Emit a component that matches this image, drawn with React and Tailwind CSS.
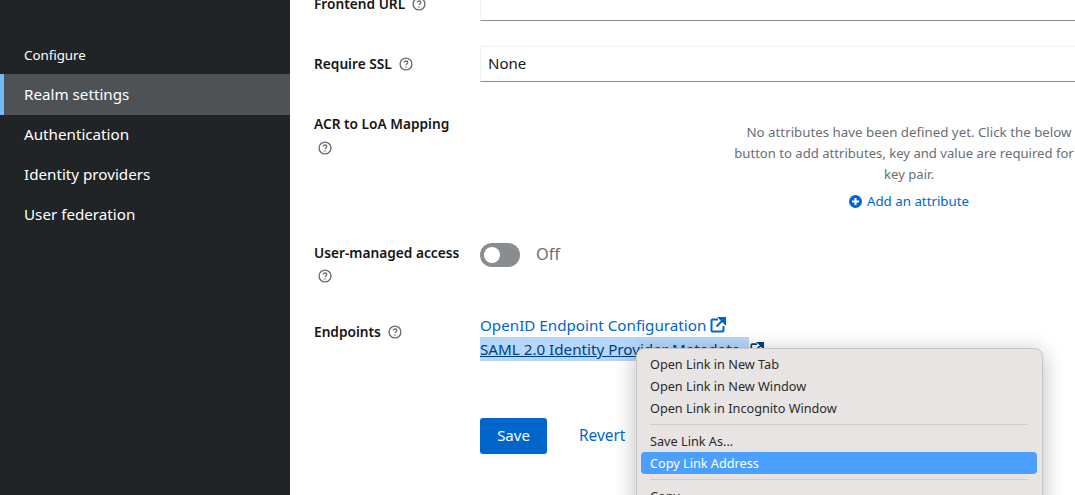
import React from "react";

const font = { fontFamily: '"Noto Sans", sans-serif' };

function Help({ className = "" }) {
  return (
    <svg width="14" height="14" viewBox="0 0 14 14" fill="none" className={"shrink-0 " + className}>
      <circle cx="7" cy="7" r="5.9" stroke="#6a6e73" strokeWidth="1.4" />
      <path d="M5.2 5.6c0-1 .8-1.6 1.8-1.6s1.8.6 1.8 1.5c0 1.3-1.8 1.3-1.8 2.6" stroke="#6a6e73" strokeWidth="1.3" fill="none" />
      <circle cx="7" cy="10" r=".8" fill="#6a6e73" />
    </svg>
  );
}

function External({ color, size = 16 }) {
  return (
    <svg width={size} height={size} viewBox="0 0 16 16" fill="none">
      <path d="M8 2.5H2.5a1 1 0 0 0-1 1v10a1 1 0 0 0 1 1h10a1 1 0 0 0 1-1V9" stroke={color} strokeWidth="2" />
      <path d="M6.5 9.5 14 2M9.5 1h5.5v5.5z" stroke={color} strokeWidth="2" fill={color} />
    </svg>
  );
}

function NavItem({ children, active }) {
  return (
    <div className={"flex items-center text-[15.2px] text-white " + (active ? "h-[41px] bg-[#4f5255] border-l-4 border-[#73bcf7] pl-5" : "h-10 pb-[2px] pl-6")}>
      {children}
    </div>
  );
}

function MenuItem({ children, active }) {
  return (
    <div className={"h-[22px] flex items-center ml-[4px] mr-[5px] px-[9px] pt-[2px] rounded-[4px] text-[12.7px] " + (active ? "bg-[#4a9fff] text-white" : "text-[#2a2a2a]")}>
      {children}
    </div>
  );
}

export default function App() {
  return (
    <div style={font} className="relative flex h-[495px] w-[1075px] overflow-hidden bg-white">
      <aside className="w-[290px] shrink-0 bg-[#212427] pt-[35px]">
        <div className="h-[39px] flex items-center pl-6 pt-[3px] text-[13.3px] text-white">Configure</div>
        <NavItem active>Realm settings</NavItem>
        <NavItem>Authentication</NavItem>
        <NavItem>Identity providers</NavItem>
        <NavItem>User federation</NavItem>
      </aside>

      <main className="flex-1 min-w-0 pl-6 -mt-[15px]">
        <div className="flex h-9">
          <div className="w-[166px] pt-[7px] flex items-start gap-[7px] text-[13.7px] font-semibold text-[#151515] leading-[24px]">
            Frontend URL <Help className="mt-[5px]" />
          </div>
          <div className="flex-1 border-b border-[#8a8d90] border-l border-l-[#f0f0f0]" />
        </div>

        <div className="flex h-9 mt-[25px]">
          <div className="w-[166px] flex items-center gap-[7px] text-[13.7px] font-semibold text-[#151515]">
            Require SSL <Help />
          </div>
          <div className="flex-1 flex items-center pl-[7px] pb-[2px] text-[15px] text-[#151515] border border-[#f0f0f0] border-r-0 border-b-[#8a8d90]">
            None
          </div>
        </div>

        <div className="flex mt-[30px] h-[112px]">
          <div className="w-[166px] text-[13.7px] font-semibold text-[#151515] leading-[24px]">
            <div>ACR to LoA Mapping</div>
            <Help className="mt-[5px] ml-[4px]" />
          </div>
          <div className="flex-1 min-w-0 pl-[254px] pt-[10px]">
            <div className="w-[350px] flex flex-col items-center text-[13.1px] leading-[21px] text-[#6a6e73] whitespace-nowrap">
              <div className="text-[13.3px]">No attributes have been defined yet. Click the below</div>
              <div className="mr-[10px]">button to add attributes, key and value are required for</div>
              <div>key pair.</div>
              <div className="mt-[6px] flex items-center gap-[5px] text-[13.3px] text-[#0066cc]">
                <svg width="13" height="13" viewBox="0 0 13 13">
                  <circle cx="6.5" cy="6.5" r="6.5" fill="#0066cc" />
                  <path d="M6.5 3v7M3 6.5h7" stroke="#fff" strokeWidth="2" />
                </svg>
                Add an attribute
              </div>
            </div>
          </div>
        </div>

        <div className="flex mt-[17px] h-[50px]">
          <div className="w-[166px] text-[13.7px] font-semibold text-[#151515] leading-[24px]">
            <div>User-managed access</div>
            <Help className="mt-[4px] ml-[4px]" />
          </div>
          <div className="flex items-start gap-4">
            <div className="mt-[2px] w-10 h-6 rounded-full bg-[#8a8d90] flex items-center pl-1">
              <div className="w-4 h-4 rounded-full bg-white" />
            </div>
            <span className="text-[16.3px] leading-[26px] text-[#6a6e73]">Off</span>
          </div>
        </div>

        <div className="flex mt-[22px] h-[48px]">
          <div className="w-[166px] pt-[7px] flex items-start gap-[7px] text-[13.7px] font-semibold text-[#151515] leading-[24px]">
            Endpoints <Help className="mt-[5px]" />
          </div>
          <div className="text-[15.2px] leading-6">
            <div className="flex items-center gap-[4px] text-[#0066cc]">
              OpenID Endpoint Configuration <External color="#0066cc" />
            </div>
            <div className="flex items-center gap-[1px] text-[#004080]">
              <span className="bg-[#b4d7fb] underline whitespace-nowrap w-[269px] overflow-hidden">SAML 2.0 Identity Provider Metadata</span>
              <External color="#004080" size={14} />
            </div>
          </div>
        </div>

        <div className="flex mt-[57px] ml-[166px] items-center gap-8">
          <button className="h-9 w-[67px] pb-[2px] rounded-[3px] bg-[#0066cc] text-white text-[15px]">Save</button>
          <span className="text-[15.4px] text-[#0066cc]">Revert</span>
        </div>
      </main>

      <div className="absolute left-[636px] top-[348px] w-[407px] h-[170px] rounded-[8px] bg-[#e8e4e4] border border-[#c9c6c6] shadow-[0_4px_22px_rgba(0,0,0,0.28)] pt-[4px] flex flex-col">
        <MenuItem>Open Link in New Tab</MenuItem>
        <MenuItem>Open Link in New Window</MenuItem>
        <MenuItem>Open Link in Incognito Window</MenuItem>
        <div className="my-[5px] ml-[13px] mr-[14px] h-px bg-[#cfcccc]" />
        <MenuItem>Save Link As...</MenuItem>
        <MenuItem active>Copy Link Address</MenuItem>
        <div className="my-[5px] ml-[13px] mr-[14px] h-px bg-[#cfcccc]" />
        <MenuItem>Copy</MenuItem>
      </div>
    </div>
  );
}
